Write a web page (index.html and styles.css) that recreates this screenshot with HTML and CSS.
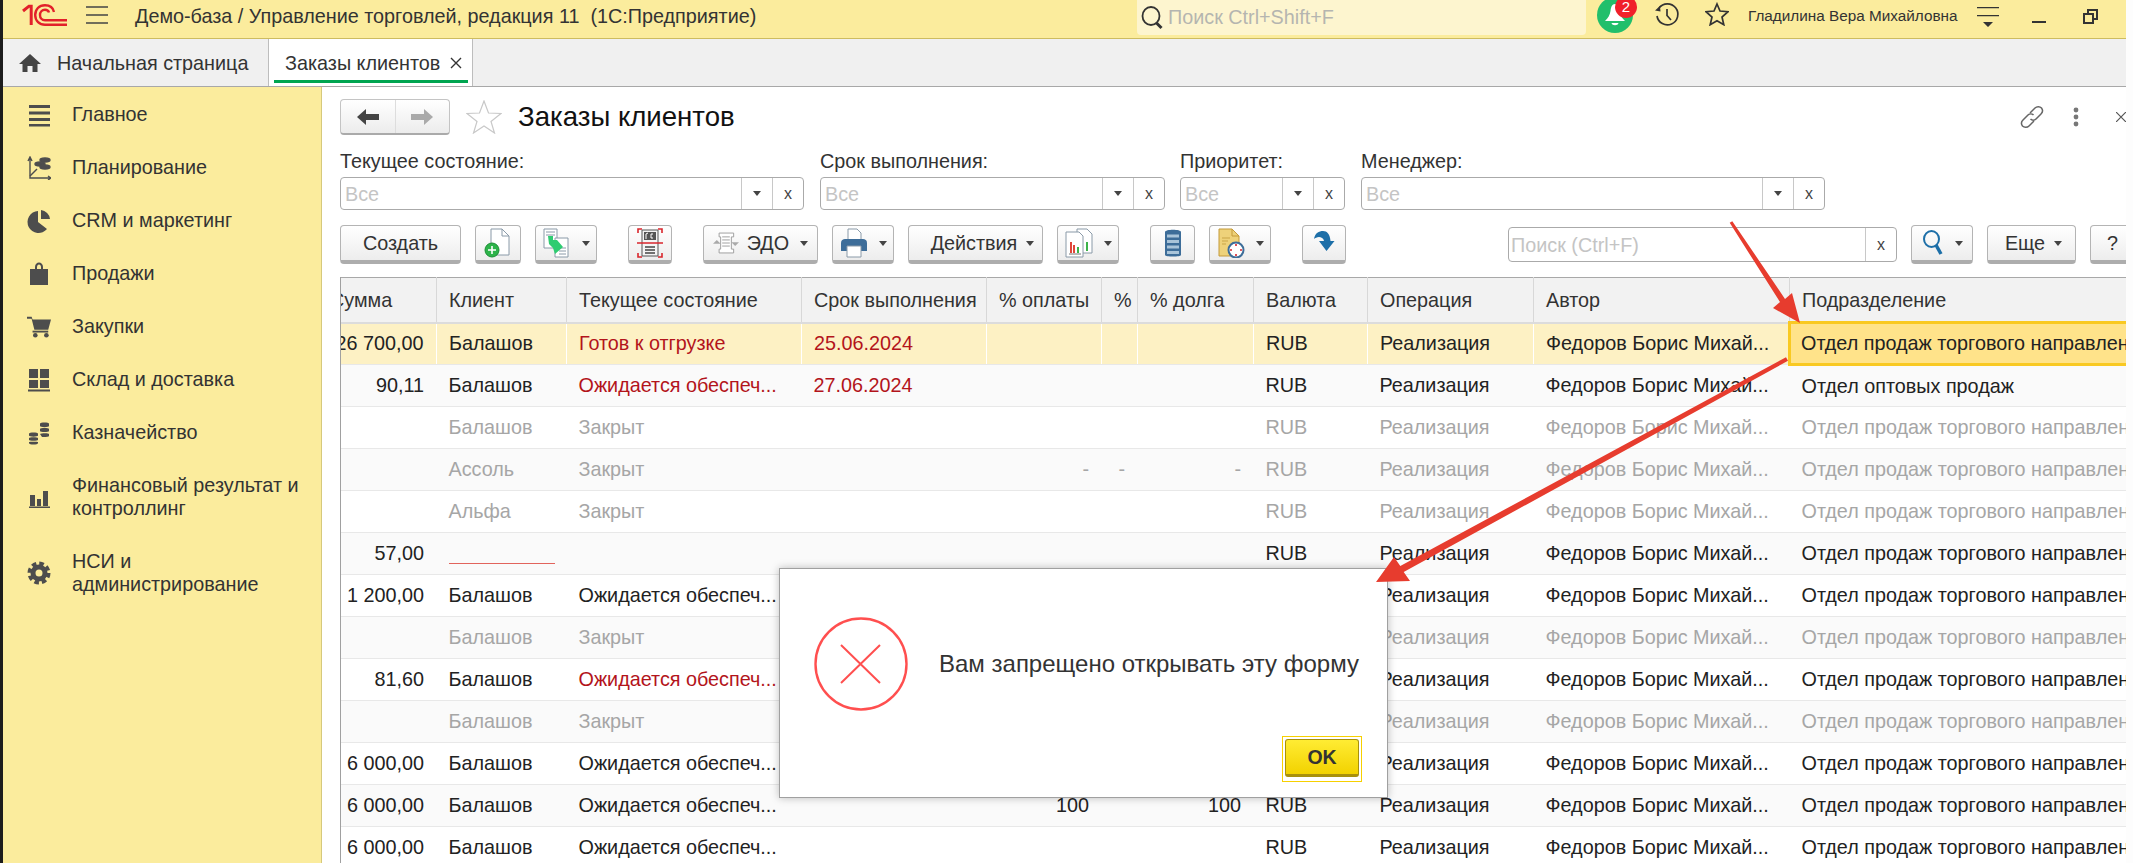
FILE: index.html
```html
<!DOCTYPE html>
<html lang="ru">
<head>
    <meta charset="UTF-8">
    <title>Заказы клиентов</title>
    <link rel="stylesheet" href="styles.css">
</head>
<body>
<div class="edge"></div>
<div class="app">
    <div class="topbar">
        <svg class="logo" width="46" height="22" viewBox="0 0 46 22" fill="none" stroke="#e2202a" stroke-width="2.4">
            <path d="M1 7 L7 2.2 H9.2 V21" stroke-width="3"/>
            <path d="M32 8 C31 3 27 1.2 23 1.2 C17 1.2 13.2 5.5 13.2 11 C13.2 17 17.5 20.8 23 20.8 H45"/>
            <path d="M27 8.5 C26.5 6.8 25 5.8 23 5.8 C20 5.8 18 8 18 11 C18 14 20 16.2 23 16.2 H45"/>
        </svg>
        <svg class="menu-icon" width="22" height="18" viewBox="0 0 22 18" stroke="#444" stroke-width="1.6"><path d="M0 1H22M0 9H22M0 17H22"/></svg>
        <div class="app-title">Демо-база / Управление торговлей, редакция 11&nbsp; (1С:Предприятие)</div>
        <div class="global-search">
            <svg width="25" height="24" viewBox="0 0 25 24" fill="none" stroke="#333"><ellipse cx="11" cy="10" rx="8.5" ry="9" stroke-width="1.8"/><path d="M16.5 17 L21.5 22" stroke-width="3"/></svg>
            <span>Поиск Ctrl+Shift+F</span>
        </div>
        <div class="bell">
            <svg width="22" height="24" viewBox="0 0 22 24" fill="#fff"><path d="M11 1 C14 1 15 4 15.5 8 C16 12 18 15 21 18 H1 C4 15 6 12 6.500 8 C7 4 8 1 11 1Z"/><path d="M7.500 20 H14.500 C14 23 8 23 7.500 20Z"/></svg>
            <span class="badge">2</span>
        </div>
        <svg class="bar-icon history" width="26" height="26" viewBox="0 0 26 26" fill="none" stroke="#333" stroke-width="1.7"><path d="M5 6 A10.500 10.500 0 1 1 3 14"/><path d="M13 7 V13.500 L17 18"/><path d="M1 8.500 L6.500 9.500 L6 4Z" fill="#333" stroke="none"/></svg>
        <svg class="bar-icon star-icon" width="24" height="24" viewBox="0 0 24 24" fill="none" stroke="#333" stroke-width="1.7"><path d="M12 2 L15 9 L23 9.700 L17 15 L18.800 22.700 L12 18.700 L5.200 22.700 L7 15 L1 9.700 L9 9Z"/></svg>
        <div class="user-name">Гладилина Вера Михайловна</div>
        <svg class="filter-icon" width="22" height="22" viewBox="0 0 22 22" fill="#333"><path d="M0 1H22V2.200H0ZM0 9H22V10.200H0ZM6 16H16L11 21Z"/></svg>
        <div class="minimize"></div>
        <svg class="restore" width="15" height="15" viewBox="0 0 15 15" fill="none" stroke="#333" stroke-width="2"><path d="M1 5H10V14H1Z"/><path d="M5 4V1H14V10H11"/></svg>
    </div>

    <div class="tabs">
        <div class="tab home-tab">
            <svg width="22" height="18" viewBox="0 0 22 18" fill="#444"><path d="M11 0 L22 10 H18.500 V18 H13.500 V12 H8.500 V18 H3.500 V10 H0Z"/></svg>
            <span>Начальная страница</span>
        </div>
        <div class="tab active-tab">
            <span>Заказы клиентов</span>
            <svg width="12" height="12" viewBox="0 0 12 12" stroke="#333" stroke-width="1.4"><path d="M1 1L11 11M11 1L1 11"/></svg>
        </div>
    </div>

    <div class="workspace">
        <nav class="sidebar">
            <a class="nav-item">
                <svg width="24" height="24" viewBox="0 0 24 24" fill="#4d4d4d"><path d="M2 2H23V5H2ZM2 8.500H23V11.500H2ZM2 15H23V18H2ZM2 21H23V23.500H2Z"/></svg>
                <span>Главное</span>
            </a>
            <a class="nav-item">
                <svg width="24" height="24" viewBox="0 0 24 24" fill="none" stroke="#4d4d4d" stroke-width="1.4"><path d="M3 2V22H24M1 5L3 1L5 5M21 20L24 22L21 24"/><path d="M3 20L10 13"/><ellipse cx="18" cy="4" rx="5" ry="2" fill="#4d4d4d"/><ellipse cx="13" cy="8" rx="5" ry="2" fill="#4d4d4d"/><ellipse cx="18" cy="11" rx="5" ry="2" fill="#4d4d4d"/></svg>
                <span>Планирование</span>
            </a>
            <a class="nav-item">
                <svg width="24" height="24" viewBox="0 0 24 24" fill="#4d4d4d"><path d="M11 2 V13 L20 20 A11 11 0 1 1 11 2Z"/><path d="M14 1 A10 10 0 0 1 23 10 H14Z"/></svg>
                <span>CRM и маркетинг</span>
            </a>
            <a class="nav-item">
                <svg width="24" height="24" viewBox="0 0 24 24" fill="#4d4d4d"><path d="M3 7H8V5C8 2 10 0.500 12 0.500C14 0.500 16 2 16 5V7H21V23H3Z"/><path d="M10 7V5C10 3.500 11 2.500 12 2.500C13 2.500 14 3.500 14 5V7Z" fill="#fbec9d"/></svg>
                <span>Продажи</span>
            </a>
            <a class="nav-item">
                <svg width="26" height="24" viewBox="0 0 26 24" fill="#4d4d4d"><path d="M0 1H5L6 4H26L23 15H8L5 3H0Z"/><path d="M6 16H23V18H6Z"/><circle cx="9" cy="21" r="2.500"/><circle cx="21" cy="21" r="2.500"/></svg>
                <span>Закупки</span>
            </a>
            <a class="nav-item">
                <svg width="24" height="24" viewBox="0 0 24 24" fill="#4d4d4d"><path d="M2 1H11V10H2ZM13 1H22V10H13ZM2 12H11V20H2ZM13 12H22V20H13ZM1 21.500H23V23.500H1Z"/></svg>
                <span>Склад и доставка</span>
            </a>
            <a class="nav-item">
                <svg width="24" height="24" viewBox="0 0 24 24" fill="#4d4d4d"><path d="M13 2.500C13 1 22 1 22 2.500V5C22 6.500 13 6.500 13 5ZM13 8C13 6.800 22 6.800 22 8V10C22 11.300 13 11.300 13 10ZM13 13C14 12 22 12 22 13V15C22 16 17 16.300 15 16ZM2 12.500C2 11 11 11 11 12.500V14.500C11 16 2 16 2 14.500ZM2 17C2 16 11 16 11 17V19C11 20 2 20 2 19ZM2 21C2 20.500 11 20.500 11 21V22C11 24 2 24 2 22Z"/></svg>
                <span>Казначейство</span>
            </a>
            <a class="nav-item">
                <svg width="24" height="24" viewBox="0 0 24 24" fill="#4d4d4d"><path d="M3 10H8V21H3ZM10 14H14V21H10ZM16 6H21V21H16ZM2 21.500H23V23H2Z"/></svg>
                <span>Финансовый результат и контроллинг</span>
            </a>
            <a class="nav-item">
                <svg width="24" height="24" viewBox="0 0 24 24" fill="none" stroke="#4d4d4d"><circle cx="12" cy="12" r="6" stroke-width="5"/><circle cx="12" cy="12" r="9.500" stroke-width="4" stroke-dasharray="4.500 2.960"/></svg>
                <span>НСИ и администрирование</span>
            </a>
        </nav>

        <main class="content">
            <div class="head-row">
                <div class="history-nav">
                    <div class="nav-half">
                        <svg width="22" height="16" viewBox="0 0 22 16" fill="#444"><path d="M0 8L9 0V5H22V11H9V16Z"/></svg>
                    </div>
                    <div class="nav-half">
                        <svg width="22" height="16" viewBox="0 0 22 16" fill="#aaa"><path d="M22 8L13 0V5H0V11H13V16Z"/></svg>
                    </div>
                </div>
                <svg class="fav-star" width="36" height="34" viewBox="0 0 36 34" fill="none" stroke="#c8c8c8" stroke-width="1.2"><path d="M18 1 L22.500 13 L35 13.500 L25 21.500 L28.500 33 L18 26 L7.500 33 L11 21.500 L1 13.500 L13.500 13Z"/></svg>
                <h1 class="page-title">Заказы клиентов</h1>
                <div class="head-tools">
                    <svg width="24" height="24" viewBox="0 0 24 24" fill="none" stroke="#666" stroke-width="1.5"><path d="M10 8 L15 3 C17 1 20 1.500 21.500 3 C23 5 23 7 21 9 L16 14 C14.500 15.500 12 15.500 10.500 14"/><path d="M14 16 L9 21 C7 23 4 22.500 2.500 21 C1 19 1 17 3 15 L8 10 C9.500 8.500 12 8.500 13.500 10"/></svg>
                    <svg class="kebab" width="6" height="20" viewBox="0 0 6 20" fill="#777"><circle cx="3" cy="3" r="2.400"/><circle cx="3" cy="10" r="2.400"/><circle cx="3" cy="17" r="2.400"/></svg>
                    <svg class="close-form" width="10" height="10" viewBox="0 0 10 10" stroke="#555" stroke-width="1.2"><path d="M0 0L10 10M10 0L0 10"/></svg>
                </div>
            </div>

            <div class="filters">
                <div class="filter filter-state">
                    <label>Текущее состояние:</label>
                    <div class="combo"><span class="combo-value">Все</span><span class="combo-btn"><i class="caret"></i></span><span class="combo-btn">x</span></div>
                </div>
                <div class="filter filter-date">
                    <label>Срок выполнения:</label>
                    <div class="combo"><span class="combo-value">Все</span><span class="combo-btn"><i class="caret"></i></span><span class="combo-btn">x</span></div>
                </div>
                <div class="filter filter-priority">
                    <label>Приоритет:</label>
                    <div class="combo"><span class="combo-value">Все</span><span class="combo-btn"><i class="caret"></i></span><span class="combo-btn">x</span></div>
                </div>
                <div class="filter filter-manager">
                    <label>Менеджер:</label>
                    <div class="combo"><span class="combo-value">Все</span><span class="combo-btn"><i class="caret"></i></span><span class="combo-btn">x</span></div>
                </div>
            </div>

            <div class="toolbar">
                <button class="btn w-create">Создать</button>
                <button class="btn w-icon">
                    <svg width="28" height="30" viewBox="0 0 28 30" fill="none"><path d="M7 1H18L25 8V27H7Z" fill="#fff" stroke="#8a9aa8"/><path d="M18 1V8H25" stroke="#8a9aa8"/><circle cx="8" cy="22" r="7" fill="#2db34a" stroke="#1c8f36"/><path d="M8 18V26M4 22H12" stroke="#fff" stroke-width="1.6"/></svg>
                </button>
                <button class="btn w-drop">
                    <svg width="28" height="30" viewBox="0 0 28 30" fill="none" stroke="#8a9aa8"><path d="M1 1H14V20H1Z" fill="#fff"/><path d="M12 10H25V29H12Z" fill="#fff"/><path d="M3 4H12M3 7H12M16 20H23M16 23H23M16 26H23"/><path d="M5 8H10V12L14 12L20 19L12 26L10 20L6 16Z" fill="#2ecc71" stroke="none"/></svg>
                    <i class="caret"></i>
                </button>
                <button class="btn w-scan spaced">
                    <svg width="26" height="30" viewBox="0 0 26 30" fill="none"><path d="M1 5V1H5M21 1H25V5M1 25V29H5M21 29H25V25" stroke="#d9262c" stroke-width="1.6"/><path d="M5 2H21V28H5Z" fill="#f4f4f4" stroke="#555"/><path d="M7 4H19V12H7Z" fill="#555"/><path d="M9 11V6L11 5M16 6H14V10H16" stroke="#fff"/><path d="M0 15H26" stroke="#d9262c" stroke-width="1.5"/><path d="M8 19H18M8 22H18M8 25H18" stroke="#444" stroke-width="1.4"/></svg>
                </button>
                <button class="btn w-edo spaced">
                    <svg width="26" height="30" viewBox="0 0 34 30" fill="none" stroke="#999" stroke-width="1.2"><path d="M8 2H27V7H24V23H27V28H8V23H10V7H8Z" fill="#fff"/><path d="M12 7H22M12 11H22M12 15H22M12 19H22"/><path d="M5 11L0 16H10ZM29 19L24 14H34Z" fill="#aaa" stroke="none"/></svg>
                    <span>ЭДО</span><i class="caret"></i>
                </button>
                <button class="btn w-drop">
                    <svg width="28" height="30" viewBox="0 0 28 30" fill="none"><path d="M8 1H17L21 5V12H8Z" fill="#fff" stroke="#8a9aa8"/><path d="M1 15C1 12 3 11 5 11H23C25 11 27 12 27 15V23H1Z" fill="#3d6d99"/><path d="M7 18H21V29H7Z" fill="#fff" stroke="#8a9aa8"/></svg>
                    <i class="caret"></i>
                </button>
                <button class="btn w-actions"><span>Действия</span><i class="caret"></i></button>
                <button class="btn w-drop">
                    <svg width="28" height="30" viewBox="0 0 28 30" fill="none" stroke="#8a9aa8"><path d="M12 1H22L27 6V25H12Z" fill="#fff"/><path d="M1 4H14L18 8V29H1Z" fill="#fff"/><path d="M5 14H7V25H5Z" fill="#e0463a" stroke="none"/><path d="M8 17H10V25H8Z" fill="#e0463a" stroke="none"/><path d="M12 19H14V25H12Z" fill="#3db34a" stroke="none"/><path d="M21 14H23V23H21Z" fill="#3db34a" stroke="none"/><path d="M4 26H16" stroke="#777"/></svg>
                    <i class="caret"></i>
                </button>
                <button class="btn w-list spaced">
                    <svg width="18" height="30" viewBox="0 0 18 30" fill="#3d6d99"><path d="M1 4C1 1 17 1 17 4V27C17 29 1 29 1 27Z"/><path d="M3 6.500H15V9.500H3ZM3 12H15V15H3ZM3 17.500H15V20.500H3ZM3 23H15V26H3Z" fill="#a9c4d9"/></svg>
                </button>
                <button class="btn w-drop">
                    <svg width="28" height="30" viewBox="0 0 28 30" fill="none"><path d="M2 1H15L22 8V28H2Z" fill="#eed27a" stroke="#c49a3a"/><path d="M15 1V8H22" stroke="#c49a3a"/><path d="M5 10H13M5 13H11M5 16H9" stroke="#c9a546"/><circle cx="19" cy="22" r="7.500" fill="#fff" stroke="#3d6d99" stroke-width="2"/><path d="M19 16V18M19 26V28M13 22H15M23 22H25" stroke="#d9262c" stroke-width="1.6"/></svg>
                    <i class="caret"></i>
                </button>
                <button class="btn w-scan spaced">
                    <svg width="22" height="26" viewBox="0 0 22 26" fill="#1d6fa8"><path d="M1 9C2 3 6 1 10 1C14 1 17 4 17.500 11H21.500L13.500 21L6 11H11C10.500 8 8 7 6 7C4 7 2 8 1 9Z"/></svg>
                </button>
                <div class="search-box"><span class="search-value">Поиск (Ctrl+F)</span><span class="combo-btn">x</span></div>
                <button class="btn w-drop">
                    <svg width="22" height="28" viewBox="0 0 22 28" fill="none" stroke="#1d6fa8"><ellipse cx="9.500" cy="10" rx="7.500" ry="8" stroke-width="2"/><path d="M14 16L19 25" stroke-width="3.500"/></svg>
                    <i class="caret"></i>
                </button>
                <button class="btn w-more"><span>Еще</span><i class="caret"></i></button>
                <button class="btn w-help">?</button>
            </div>

            <div class="grid-wrap">
                <table class="grid">
                    <colgroup>
                        <col class="c-sum"><col class="c-client"><col class="c-state"><col class="c-date"><col class="c-paid"><col class="c-pct"><col class="c-debt"><col class="c-cur"><col class="c-op"><col class="c-author"><col class="c-dept">
                    </colgroup>
                    <thead>
                        <tr>
                            <th class="sum-head">Сумма</th><th>Клиент</th><th>Текущее состояние</th><th>Срок выполнения</th><th>% оплаты</th><th>%</th><th>% долга</th><th>Валюта</th><th>Операция</th><th>Автор</th><th>Подразделение</th>
                        </tr>
                    </thead>
                    <tbody>
                        <tr class="current">
                            <td class="num">26 700,00</td><td>Балашов</td><td class="red">Готов к отгрузке</td><td class="red">25.06.2024</td><td></td><td></td><td></td><td>RUB</td><td>Реализация</td><td>Федоров Борис Михай...</td><td class="selected">Отдел продаж торгового направления</td>
                        </tr>
                        <tr>
                            <td class="num">90,11</td><td>Балашов</td><td class="red">Ожидается обеспеч...</td><td class="red">27.06.2024</td><td></td><td></td><td></td><td>RUB</td><td>Реализация</td><td>Федоров Борис Михай...</td><td>Отдел оптовых продаж</td>
                        </tr>
                        <tr class="closed">
                            <td class="num"></td><td>Балашов</td><td>Закрыт</td><td></td><td></td><td></td><td></td><td>RUB</td><td>Реализация</td><td>Федоров Борис Михай...</td><td>Отдел продаж торгового направления</td>
                        </tr>
                        <tr class="closed">
                            <td class="num"></td><td>Ассоль</td><td>Закрыт</td><td></td><td class="num dash">-</td><td class="num dash">-</td><td class="num dash">-</td><td>RUB</td><td>Реализация</td><td>Федоров Борис Михай...</td><td>Отдел продаж торгового направления</td>
                        </tr>
                        <tr class="closed">
                            <td class="num"></td><td>Альфа</td><td>Закрыт</td><td></td><td></td><td></td><td></td><td>RUB</td><td>Реализация</td><td>Федоров Борис Михай...</td><td>Отдел продаж торгового направления</td>
                        </tr>
                        <tr>
                            <td class="num">57,00</td><td><span class="scribble"></span></td><td></td><td></td><td></td><td></td><td></td><td>RUB</td><td>Реализация</td><td>Федоров Борис Михай...</td><td>Отдел продаж торгового направления</td>
                        </tr>
                        <tr>
                            <td class="num">1 200,00</td><td>Балашов</td><td>Ожидается обеспеч...</td><td></td><td></td><td></td><td></td><td>RUB</td><td>Реализация</td><td>Федоров Борис Михай...</td><td>Отдел продаж торгового направления</td>
                        </tr>
                        <tr class="closed">
                            <td class="num"></td><td>Балашов</td><td>Закрыт</td><td></td><td></td><td></td><td></td><td>RUB</td><td>Реализация</td><td>Федоров Борис Михай...</td><td>Отдел продаж торгового направления</td>
                        </tr>
                        <tr>
                            <td class="num">81,60</td><td>Балашов</td><td class="red">Ожидается обеспеч...</td><td></td><td></td><td></td><td></td><td>RUB</td><td>Реализация</td><td>Федоров Борис Михай...</td><td>Отдел продаж торгового направления</td>
                        </tr>
                        <tr class="closed">
                            <td class="num"></td><td>Балашов</td><td>Закрыт</td><td></td><td></td><td></td><td></td><td>RUB</td><td>Реализация</td><td>Федоров Борис Михай...</td><td>Отдел продаж торгового направления</td>
                        </tr>
                        <tr>
                            <td class="num">6 000,00</td><td>Балашов</td><td>Ожидается обеспеч...</td><td></td><td></td><td></td><td></td><td>RUB</td><td>Реализация</td><td>Федоров Борис Михай...</td><td>Отдел продаж торгового направления</td>
                        </tr>
                        <tr>
                            <td class="num">6 000,00</td><td>Балашов</td><td>Ожидается обеспеч...</td><td></td><td class="num">100</td><td></td><td class="num">100</td><td>RUB</td><td>Реализация</td><td>Федоров Борис Михай...</td><td>Отдел продаж торгового направления</td>
                        </tr>
                        <tr>
                            <td class="num">6 000,00</td><td>Балашов</td><td>Ожидается обеспеч...</td><td></td><td></td><td></td><td></td><td>RUB</td><td>Реализация</td><td>Федоров Борис Михай...</td><td>Отдел продаж торгового направления</td>
                        </tr>
                    </tbody>
                </table>
            </div>
        </main>
    </div>
</div>

<div class="dialog">
    <div class="dialog-body">
        <svg width="94" height="94" viewBox="0 0 94 94" fill="none" stroke="#ff4f4f"><circle cx="47" cy="47" r="45.500" stroke-width="2.400"/><path d="M27 28L66 66M66 28L27 66" stroke-width="2"/></svg>
        <div class="dialog-text">Вам запрещено открывать эту форму</div>
    </div>
    <div class="dialog-foot">
        <div class="ok-focus"><button class="ok-btn">OK</button></div>
    </div>
</div>

<svg class="arrows" width="2133" height="863" viewBox="0 0 2133 863" fill="#e73c2e">
    <polygon points="1732.300,221.200 1785,298.900 1792,293 1800,323 1773,308 1780,302.100 1729.700,222.800"/>
    <polygon points="1786,357.200 1788,360.800 1403.700,572 1410,581 1376,582 1394,557 1400.300,566"/>
</svg>
</body>
</html>
```

FILE: styles.css
```css
* {
    box-sizing: border-box;
}

html, body {
    margin: 0;
    height: 863px;
    overflow: hidden;
}

body {
    display: flex;
    background: #fdfdfd;
    color: #333;
    font-family: "Liberation Sans", Arial, sans-serif;
    font-size: 19.800px;
}

.edge {
    width: 3px;
    background: #1c1c1c;
}

.app {
    width: 2123px;
    height: 863px;
    display: flex;
    flex-direction: column;
    overflow: hidden;
    background: #fff;
}

/* top bar */
.topbar {
    height: 39px;
    flex: none;
    display: flex;
    align-items: flex-start;
    background: #fbec9d;
    border-bottom: 1px solid #cdbc60;
    position: relative;
}

.logo {
    margin: 4px 0 0 19px;
}

.menu-icon {
    margin: 6px 0 0 18px;
}

.app-title {
    margin-left: 27px;
    line-height: 33px;
    white-space: pre;
}

.global-search {
    position: absolute;
    left: 1134px;
    top: 0;
    width: 449px;
    height: 35px;
    display: flex;
    align-items: center;
    padding-left: 3px;
    background: #fdf5cf;
    border-radius: 0 0 4px 4px;
    color: #b5b5b0;
}

.global-search span {
    margin-left: 3px;
}

.bell {
    position: absolute;
    left: 1594px;
    top: -3px;
    width: 36px;
    height: 36px;
    border-radius: 50%;
    background: #21bf6b;
    display: flex;
    align-items: center;
    justify-content: center;
}

.badge {
    position: absolute;
    right: -4px;
    top: -1px;
    width: 22px;
    height: 22px;
    padding-top: 2px;
    border-radius: 50%;
    background: #f0202a;
    color: #fff;
    font-size: 15px;
    line-height: 18px;
    text-align: center;
}

.bar-icon {
    position: absolute;
    top: 2px;
}

.history {
    left: 1651px;
}

.star-icon {
    left: 1702px;
}

.user-name {
    position: absolute;
    left: 1745px;
    top: 0;
    line-height: 31px;
    font-size: 15.300px;
    white-space: nowrap;
}

.filter-icon {
    position: absolute;
    left: 1974px;
    top: 6px;
}

.minimize {
    position: absolute;
    left: 2029px;
    top: 21px;
    width: 14px;
    height: 2px;
    background: #333;
}

.restore {
    position: absolute;
    left: 2080px;
    top: 9px;
}

/* tabs */
.tabs {
    height: 48px;
    flex: none;
    display: flex;
    background: #f0f0f0;
    border-bottom: 1px solid #a8a8a8;
}

.tab {
    display: flex;
    align-items: center;
    height: 47px;
    padding-top: 1px;
    white-space: nowrap;
}

.home-tab {
    width: 266px;
    padding-left: 16px;
    gap: 16px;
    border-right: 1px solid #bdbdbd;
}

.active-tab {
    width: 204px;
    padding-left: 16px;
    gap: 10px;
    background: #fff;
    border-right: 1px solid #bdbdbd;
    position: relative;
}

.active-tab::after {
    content: "";
    position: absolute;
    left: 5px;
    right: 4px;
    bottom: 3px;
    height: 3px;
    background: #00a550;
}

/* sidebar */
.workspace {
    flex: 1;
    display: flex;
    min-height: 0;
}

.sidebar {
    width: 319px;
    flex: none;
    padding-top: 1px;
    background: #fbec9d;
    border-right: 1px solid #d6c97c;
}

.nav-item {
    display: flex;
    align-items: center;
    padding: 15px 16px 15px 24px;
    line-height: 23px;
    min-height: 53px;
}

.nav-item svg {
    flex: none;
    width: 24px;
    margin: -1px 0;
}

.nav-item span {
    margin-left: 21px;
}

/* form */
.content {
    width: 1804px;
    flex: none;
    padding: 12px 0 0 18px;
    overflow: hidden;
}

.head-row {
    height: 36px;
    display: flex;
    align-items: center;
}

.history-nav {
    width: 110px;
    height: 36px;
    display: flex;
    border: 1px solid #c4c4c4;
    border-bottom: 2px solid #aaa;
    border-radius: 4px;
    background: linear-gradient(#fff, #ececec);
}

.nav-half {
    flex: 1;
    display: flex;
    align-items: center;
    justify-content: center;
}

.nav-half + .nav-half {
    border-left: 1px solid #ddd;
}

.fav-star {
    margin: 0 16px 0 16px;
}

.page-title {
    margin: 0;
    color: #111;
    font-size: 27.600px;
    font-weight: normal;
    white-space: nowrap;
}

.head-tools {
    margin-left: auto;
    display: flex;
    align-items: center;
}

.head-tools svg {
    flex: none;
}

.kebab {
    margin-left: 29px;
}

.close-form {
    margin-left: 37px;
}

.filters {
    display: flex;
    margin-top: 14px;
}

.filter label {
    display: block;
    height: 28px;
    padding-top: 1px;
    line-height: 22px;
    white-space: nowrap;
}

.filter-state {
    width: 464px;
}

.filter-date {
    width: 345px;
    margin-left: 16px;
}

.filter-priority {
    width: 165px;
    margin-left: 15px;
}

.filter-manager {
    width: 464px;
    margin-left: 16px;
}

.combo, .search-box {
    display: flex;
    height: 33px;
    border: 1px solid #aaa;
    border-radius: 4px;
    background: #fff;
}

.combo-value, .search-value {
    flex: 1;
    padding-left: 4px;
    color: #c4c4c4;
    line-height: 32px;
    white-space: nowrap;
}

.combo-btn {
    width: 31px;
    flex: none;
    display: flex;
    align-items: center;
    justify-content: center;
    border-left: 1px solid #c8c8c8;
    color: #444;
    font-size: 16px;
}

.caret {
    display: inline-block;
    width: 0;
    height: 0;
    border-left: 4px solid transparent;
    border-right: 4px solid transparent;
    border-top: 5px solid #444;
}

/* toolbar */
.toolbar {
    display: flex;
    gap: 14px;
    height: 39px;
    margin-top: 15px;
}

.btn {
    height: 39px;
    flex: none;
    display: flex;
    align-items: center;
    justify-content: center;
    gap: 11px;
    padding: 0;
    border: 1px solid #b4b4b4;
    border-bottom: 4px solid #adadad;
    border-radius: 4px;
    background: linear-gradient(#fff, #ededed);
    color: #333;
    font: inherit;
}

.spaced {
    margin-left: 17px;
}

.w-create {
    width: 121px;
}

.w-icon {
    width: 46px;
}

.w-drop {
    width: 62px;
}

.w-scan {
    width: 44px;
}

.w-list {
    width: 45px;
}

.w-edo {
    width: 115px;
    gap: 8px;
}

.w-edo span {
    margin-right: 3px;
}

.w-actions {
    width: 135px;
    padding-left: 14px;
    gap: 9px;
}

.w-more {
    width: 89px;
    padding-left: 4px;
    gap: 9px;
}

.w-help {
    width: 52px;
    justify-content: flex-start;
    padding-left: 16px;
}

.search-box {
    width: 389px;
    flex: none;
    height: 35px;
    margin: 2px 0 0 148px;
}

.search-box .search-value {
    padding-left: 2px;
    line-height: 34px;
}

/* list */
.grid-wrap {
    margin-top: 13px;
    border-left: 1px solid #a0a0a0;
    overflow: hidden;
}

.grid {
    width: 1825px;
    margin-left: -40px;
    table-layout: fixed;
    border-collapse: collapse;
}

.c-sum { width: 135px; }
.c-client { width: 130px; }
.c-state { width: 235px; }
.c-date { width: 185px; }
.c-paid { width: 115px; }
.c-pct { width: 36px; }
.c-debt { width: 116px; }
.c-cur { width: 114px; }
.c-op { width: 166px; }
.c-author { width: 256px; }
.c-dept { width: 337px; }

.grid th {
    height: 45px;
    padding: 2px 4px 0 12.500px;
    background: #f2f2f2;
    border-top: 1px solid #a8a8a8;
    border-bottom: 2px solid #dcdcdc;
    border-right: 1px solid #d8d8d8;
    color: #333;
    font-weight: normal;
    text-align: left;
    white-space: nowrap;
    overflow: hidden;
}

.grid th.sum-head {
    padding-left: 29px;
}

.grid td {
    height: 42px;
    padding: 0 8px 0 12.500px;
    border-bottom: 1px solid #e8e8e8;
    background: #fff;
    color: #222;
    white-space: nowrap;
    overflow: hidden;
}

.grid tbody tr:nth-child(even) td {
    background: #fafafa;
}

.grid td.num {
    padding-right: 12px;
    text-align: right;
}

.grid tr.closed td {
    color: #a6a6a6;
}

.grid tr td.red {
    color: #b3141b;
}

.grid td.dash {
    color: #777;
}

.grid tr.current td {
    background: #fdf1c4;
    border-right: 1px solid #fff;
}

.grid tr.current td.selected {
    padding-left: 10.500px;
    background: #ffe38a;
    border: 3px solid #f9c922;
    border-right: none;
}

.scribble {
    display: block;
    width: 106px;
    height: 1px;
    margin-top: 19px;
    background: #e2645c;
}

/* message box */
.dialog {
    position: absolute;
    left: 779px;
    top: 568px;
    width: 609px;
    height: 230px;
    background: #fff;
    border: 1px solid #a0a0a0;
    box-shadow: 0 0 8px rgba(0, 0, 0, 0.25);
}

.dialog-body {
    display: flex;
    align-items: center;
    padding: 48px 0 0 34px;
}

.dialog-text {
    margin-left: 31px;
    color: #333;
    font-size: 24px;
    white-space: nowrap;
}

.dialog-foot {
    display: flex;
    justify-content: flex-end;
    padding: 25px 25px 0 0;
}

.ok-focus {
    padding: 2px 2px 4px;
    border: 1px solid #f7d000;
}

.ok-btn {
    display: block;
    width: 74px;
    height: 38px;
    border: 1px solid #a8900c;
    border-bottom-width: 3px;
    border-radius: 3px;
    background: linear-gradient(#ffec33, #f2d200);
    color: #333;
    font: bold 19.500px "Liberation Sans", Arial, sans-serif;
}

.arrows {
    position: absolute;
    left: 0;
    top: 0;
    pointer-events: none;
}
```
